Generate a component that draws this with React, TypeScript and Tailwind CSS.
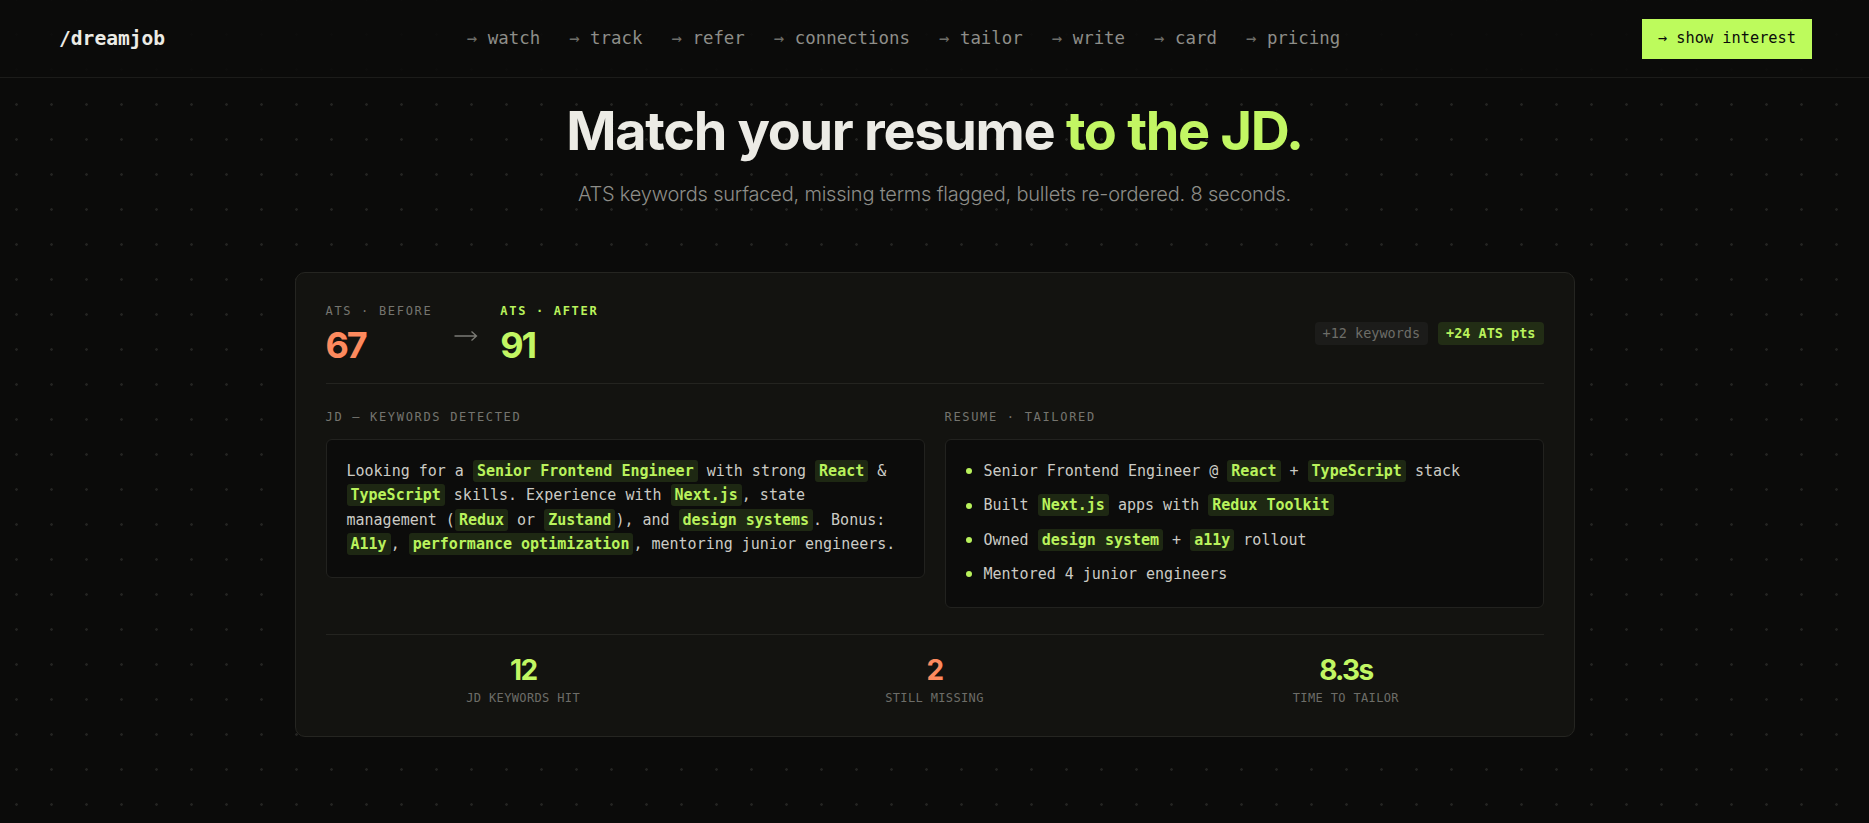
import React from "react";

const mono = "font-['DejaVu_Sans_Mono','Liberation_Mono',monospace]";
const sans = "font-['Inter','Noto_Sans',sans-serif]";

function Chip({ children }: { children: React.ReactNode }) {
  return (
    <span className="rounded-[3px] bg-[#1e2813] px-1 py-[2px] font-bold text-[#b9f25c]">
      {children}
    </span>
  );
}

function Arrow() {
  return (
    <svg width="24" height="12" viewBox="0 0 24 12" fill="none" className="mt-[5px] shrink-0">
      <path d="M0.5 6H22.5M17.5 1.5L22.5 6L17.5 10.5" stroke="#7b7b75" strokeWidth="1.3" />
    </svg>
  );
}

const links = ["watch", "track", "refer", "connections", "tailor", "write", "card", "pricing"];

export default function App() {
  return (
    <div
      className={`min-h-screen bg-[#0b0b0a] bg-[radial-gradient(circle,#232321_1px,transparent_1.6px)] bg-size-[35px_35px] bg-position-[-1px_-18px] ${sans}`}
    >
      <header className="flex h-[78px] items-center justify-between border-b border-[#1c1c1a] bg-[#0b0b0a]/90 pl-[59px] pr-[57px]">
        <div className={`${mono} text-[19.6px] font-bold text-[#ecebe5]`}>/dreamjob</div>
        <nav className={`${mono} flex items-center gap-[29px] text-[17.4px] text-[#8e8e89]`}>
          {links.map((l) => (
            <a key={l} className="whitespace-pre">
              <span className="text-[#6f6f6a]">→</span> {l}
            </a>
          ))}
        </nav>
        <button
          className={`${mono} flex h-[40px] items-center bg-[#bdfb5c] px-4 text-[15.3px] text-[#0b0b0a]`}
        >
          → show interest
        </button>
      </header>

      <section className="flex flex-col items-center">
        <h1 className="mt-[26px] text-[54px] font-bold leading-none tracking-[-0.024em] text-[#ecebe5]">
          Match your resume <span className="text-[#c2f663]">to the JD.</span>
        </h1>
        <p className="mt-[21px] text-[20px] leading-[1.55] font-light tracking-[-0.01em] text-[#8d8d88]">
          ATS keywords surfaced, missing terms flagged, bullets re-ordered. 8 seconds.
        </p>
      </section>

      <div className="mx-auto mt-[62px] w-[1280px] rounded-[10px] border border-[#252521] bg-[#131310] p-[30px]">
        <div className="flex items-center justify-between border-b border-[#242420] pb-5">
          <div className="flex items-center gap-[22px]">
            <div className="flex flex-col">
              <span className={`${mono} text-[12px] leading-4 tracking-[0.14em] text-[#75756f]`}>
                ATS · BEFORE
              </span>
              <span className="mt-2 text-[36px] font-bold leading-none tracking-[-0.06em] text-[#fd8a5e]">
                67
              </span>
            </div>
            <Arrow />
            <div className="flex flex-col">
              <span className={`${mono} text-[12px] font-bold leading-4 tracking-[0.14em] text-[#b9f25c]`}>
                ATS · AFTER
              </span>
              <span className="mt-2 text-[36px] font-bold leading-none tracking-[-0.06em] text-[#c2f663]">
                91
              </span>
            </div>
          </div>
          <div className={`${mono} flex items-center gap-2.5 text-[13.5px]`}>
            <span className="flex h-[23px] items-center rounded-[4px] bg-[#1c1c1a] px-2 text-[#6d6d68]">
              +12 keywords
            </span>
            <span className="flex h-[23px] items-center rounded-[4px] bg-[#222d15] px-2 font-bold text-[#b9f25c]">
              +24 ATS pts
            </span>
          </div>
        </div>

        <div className="grid grid-cols-2 items-start gap-5 pb-[26px] pt-[25px]">
          <div className="flex flex-col">
            <span className={`${mono} mb-[14px] text-[12px] leading-4 tracking-[0.14em] text-[#75756f]`}>
              JD — KEYWORDS DETECTED
            </span>
            <div
              className={`${mono} rounded-[6px] border border-[#22221f] bg-[#0c0c0b] px-5 pb-5 pt-[19px] text-[15px] leading-relaxed text-[#cbcbc5]`}
            >
              Looking for a <Chip>Senior Frontend Engineer</Chip> with strong <Chip>React</Chip> &amp;
              <br />
              <Chip>TypeScript</Chip> skills. Experience with <Chip>Next.js</Chip>, state
              <br />
              management (<Chip>Redux</Chip> or <Chip>Zustand</Chip>), and <Chip>design systems</Chip>. Bonus:
              <br />
              <Chip>A11y</Chip>, <Chip>performance optimization</Chip>, mentoring junior engineers.
            </div>
          </div>
          <div className="flex flex-col">
            <span className={`${mono} mb-[14px] text-[12px] leading-4 tracking-[0.14em] text-[#75756f]`}>
              RESUME · TAILORED
            </span>
            <ul
              className={`${mono} flex flex-col gap-2.5 rounded-[6px] border border-[#22221f] bg-[#0c0c0b] px-5 pb-5 pt-[19px] text-[15px] leading-relaxed text-[#cbcbc5]`}
            >
              <li className="flex items-center gap-3">
                <span className="h-1.5 w-1.5 shrink-0 rounded-full bg-[#b9f25c]" />
                <span>
                  Senior Frontend Engineer @ <Chip>React</Chip> + <Chip>TypeScript</Chip> stack
                </span>
              </li>
              <li className="flex items-center gap-3">
                <span className="h-1.5 w-1.5 shrink-0 rounded-full bg-[#b9f25c]" />
                <span>
                  Built <Chip>Next.js</Chip> apps with <Chip>Redux Toolkit</Chip>
                </span>
              </li>
              <li className="flex items-center gap-3">
                <span className="h-1.5 w-1.5 shrink-0 rounded-full bg-[#b9f25c]" />
                <span>
                  Owned <Chip>design system</Chip> + <Chip>a11y</Chip> rollout
                </span>
              </li>
              <li className="flex items-center gap-3">
                <span className="h-1.5 w-1.5 shrink-0 rounded-full bg-[#b9f25c]" />
                <span>Mentored 4 junior engineers</span>
              </li>
            </ul>
          </div>
        </div>

        <div className="grid grid-cols-3 gap-4 border-t border-[#242420] pt-[21px]">
          {[
            { v: "12", l: "JD KEYWORDS HIT", c: "text-[#c2f663]" },
            { v: "2", l: "STILL MISSING", c: "text-[#fd8a5e]" },
            { v: "8.3s", l: "TIME TO TAILOR", c: "text-[#c2f663]" },
          ].map((s) => (
            <div key={s.l} className="flex flex-col items-center">
              <span className={`text-[28px] font-bold leading-none tracking-[-0.06em] ${s.c}`}>{s.v}</span>
              <span className={`${mono} mt-1.5 text-[12px] leading-4 tracking-[0.03em] text-[#6d6d68]`}>
                {s.l}
              </span>
            </div>
          ))}
        </div>
      </div>
    </div>
  );
}
